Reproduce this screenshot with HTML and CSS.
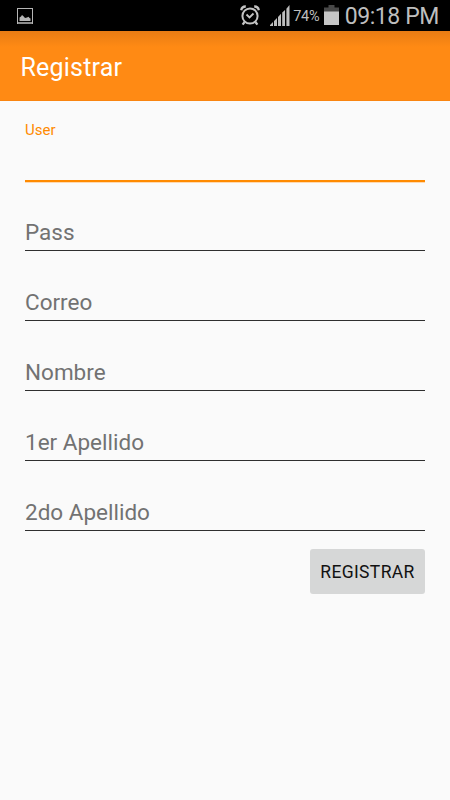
FILE: index.html
```html
<!DOCTYPE html>
<html lang="es">
<head>
    <meta charset="UTF-8">
    <meta name="viewport" content="width=device-width, initial-scale=1.0">
    <title>Registrar</title>
    <link rel="stylesheet" href="styles.css">
</head>
<body>
    <div class="status-bar">
        <svg class="icon-picture" width="16" height="16" viewBox="0 0 16 16">
            <rect x="0.5" y="0.5" width="15" height="15" fill="none" stroke="#b5b5b5"/>
            <path d="M1 15h14" stroke="#8c8c8c" stroke-width="2"/>
            <path d="M2.5 13V9.5L4 8.5 5 7l1.5 1.2L8 10l2-.5 1.5-.8L12.5 10l1 .5V13z" fill="#b5b5b5"/>
        </svg>
        <div class="status-right">
            <svg class="icon-alarm" width="20" height="21" viewBox="0 0 20 21" fill="none" stroke="#c4c4c4">
                <circle cx="10" cy="11" r="7.6" stroke-width="2"/>
                <path d="M6.5 9.5L9.5 12.5 13.5 8.5" stroke-width="1.8"/>
                <path d="M1.2 5.2A4.5 4.5 0 0 1 5.8 1.5M18.8 5.2A4.5 4.5 0 0 0 14.2 1.5M4.6 17L2.6 19.6M15.4 17l2 2.6" stroke-width="2.3"/>
            </svg>
            <svg class="icon-signal" width="20" height="21" viewBox="0 0 20 21" fill="#bdbdbd">
                <path d="M0 21v-1l3-3v4zM4 21v-5l3-3v8zM8 21v-9l3-3.2V21zM12.2 21V7.6L15 5v16zM16.4 21V3.8L19.5 0v21z"/>
            </svg>
            <span class="battery-text">74%</span>
            <svg class="icon-battery" width="15" height="20" viewBox="0 0 15 20">
                <path d="M4.5 0h6v2.5H15V7H0V2.5h4.5z" fill="#484848"/>
                <path d="M0 6.5h15V20H0z" fill="#c6c6c6"/>
            </svg>
            <span class="clock">09:18 PM</span>
        </div>
    </div>

    <header class="toolbar">
        <h1 class="toolbar-title">Registrar</h1>
    </header>

    <form class="form">
        <div class="field focused">
            <label class="field-label" for="user">User</label>
            <input class="field-input" id="user" type="text">
        </div>
        <div class="field">
            <input class="field-input" type="password" placeholder="Pass">
        </div>
        <div class="field">
            <input class="field-input" type="text" placeholder="Correo">
        </div>
        <div class="field">
            <input class="field-input" type="text" placeholder="Nombre">
        </div>
        <div class="field">
            <input class="field-input" type="text" placeholder="1er Apellido">
        </div>
        <div class="field">
            <input class="field-input" type="text" placeholder="2do Apellido">
        </div>
        <button class="btn" type="button">REGISTRAR</button>
    </form>
</body>
</html>
```
FILE: styles.css
```css
* {
    box-sizing: border-box;
}
body {
    margin: 0;
    height: 800px;
    background: #fafafa;
    font-family: Roboto, sans-serif;
    overflow: hidden;
}
.status-bar {
    display: flex;
    justify-content: space-between;
    height: 31px;
    padding: 0 11px 0 17px;
    background: #000;
    color: #bebebe;
}
.icon-picture {
    margin-top: 8px;
}
.status-right {
    display: flex;
    align-items: flex-start;
}
.icon-alarm {
    margin-top: 5px;
}
.icon-signal {
    margin: 5px 3px 0 10px;
}
.battery-text {
    width: 27px;
    margin-top: 8px;
    font-size: 14.5px;
    line-height: 17px;
    letter-spacing: -0.2px;
    white-space: nowrap;
}
.icon-battery {
    margin: 5px 6px 0 3.5px;
}
.clock {
    font-size: 23px;
    line-height: 33px;
    letter-spacing: -0.4px;
    white-space: nowrap;
}
.toolbar {
    display: flex;
    align-items: center;
    height: 70px;
    padding: 4px 20.5px 0;
    background: linear-gradient(#e87c14, #ff8a14 16px);
    border-bottom: 1px solid #f98510;
}
.toolbar-title {
    margin: 0;
    color: #fff;
    font-size: 25px;
    font-weight: 400;
    line-height: 30px;
    letter-spacing: 0.2px;
}
.form {
    display: flex;
    flex-direction: column;
    padding: 10px 25px 0;
}
.field {
    display: flex;
    flex-direction: column;
    justify-content: flex-end;
    height: 70px;
    border-bottom: 1px solid #2f2f2f;
}
.field.focused {
    justify-content: space-between;
    height: 71px;
    margin-bottom: -1px;
    padding-top: 10px;
    border-bottom: 2px solid #ff8a00;
    box-shadow: 0 1px 0 #ffd9b0;
}
.field-label {
    color: #ff8a00;
    font-size: 15px;
    line-height: 18px;
}
.field-input {
    width: 100%;
    height: 36px;
    padding: 0;
    border: none;
    outline: none;
    background: transparent;
    color: #212121;
    font-family: inherit;
    font-size: 22.5px;
}
.field-input::placeholder {
    color: #727272;
    opacity: 1;
}
.btn {
    align-self: flex-end;
    width: 115px;
    height: 45px;
    margin-top: 18px;
    padding: 1px 0 0;
    border: none;
    border-radius: 3px;
    background: #d6d7d7;
    color: #111;
    font-family: inherit;
    font-size: 17.5px;
    letter-spacing: 0.35px;
}
```
